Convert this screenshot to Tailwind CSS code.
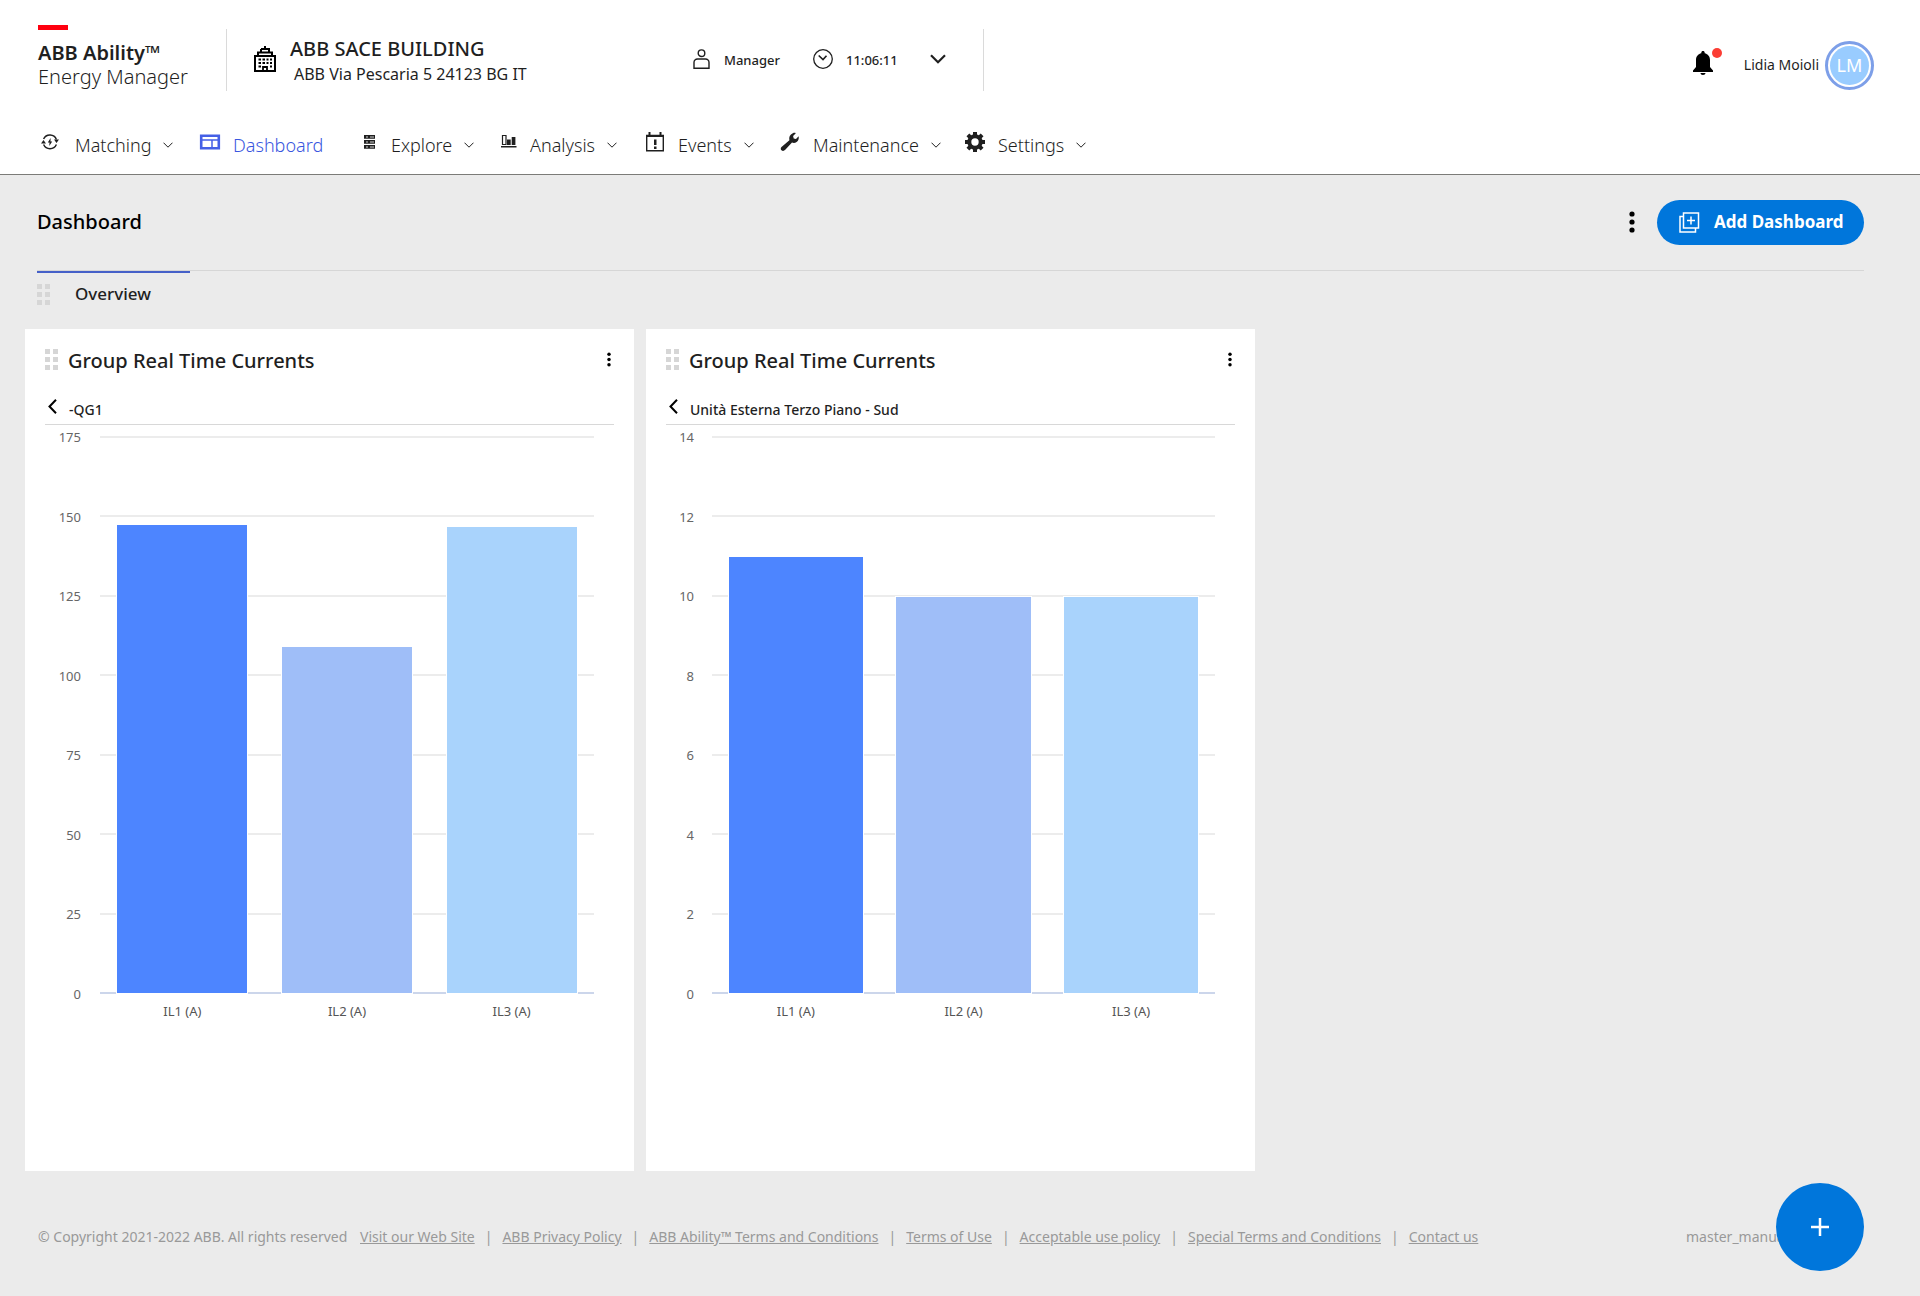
<!DOCTYPE html>
<html lang="en">
<head>
<meta charset="utf-8">
<meta name="viewport" content="width=device-width, initial-scale=1">
<title>ABB Ability Energy Manager</title>
<script src="https://cdn.jsdelivr.net/npm/@tailwindcss/browser@4"></script>
</head>
<body class="flex min-h-screen flex-col bg-[#ebebeb] font-['Noto_Sans','Open_Sans',sans-serif] text-[#1f1f1f]">

<svg class="hidden" aria-hidden="true">
  <symbol id="chev" viewBox="0 0 10 6"><path d="M.5.7 5 5.2 9.500.7" fill="none" stroke="currentColor" stroke-width="1"/></symbol>
  <symbol id="grip" viewBox="0 0 13 21"><path d="M0 0h5v5H0zM8 0h5v5H8zM0 8h5v5H0zM8 8h5v5H8zM0 16h5v5H0zM8 16h5v5H8z" fill="currentColor"/></symbol>
  <symbol id="dots" viewBox="0 0 6 22"><circle cx="3" cy="3" r="2.600"/><circle cx="3" cy="11" r="2.600"/><circle cx="3" cy="19" r="2.600"/></symbol>
  <symbol id="back" viewBox="0 0 9 15"><path d="M8 .8 1.500 7.500 8 14.200" fill="none" stroke="#000" stroke-width="2"/></symbol>
</svg>

<header class="border-b border-[#7b7b78] bg-white">
  <div class="flex h-[120px] items-start pl-[38px] pr-[46px] pt-[25px]">
    <div class="w-[188px]">
      <div class="h-[5px] w-[30px] bg-[#ff000f]"></div>
      <div class="mt-[11px] text-xl leading-6 font-semibold">ABB Ability™</div>
      <div class="text-xl leading-6 font-light">Energy Manager</div>
    </div>
    <div class="mt-1 h-[62px] w-px bg-[#dadada]"></div>
    <svg class="ml-[27px] mt-[21px] h-[26px] w-[22px]" viewBox="0 0 22 26" fill="none" stroke="#000" stroke-width="2">
      <path d="M11 0v3M7 3h8v3M7 3v3M4 10V6.500h14V10M1 10h20v15H1z"/>
      <path d="M4.500 13.500h2.500M8.500 13.500H11M12.500 13.500h2M16 13.500h2M4.500 17h2.500M8.500 17H11M12.500 17h2M16 17h2M4.500 20.500h2.500M16 20.500h2M9 25v-4h4v4" stroke-width="1.800"/>
    </svg>
    <div class="ml-[14px] mt-3 w-[403px]">
      <div class="text-xl leading-6 font-medium">ABB SACE BUILDING</div>
      <div class="pl-1 text-base leading-[26px]">ABB Via Pescaria 5 24123 BG IT</div>
    </div>
    <svg class="mt-6 h-5 w-[17px]" viewBox="0 0 17 20" fill="none" stroke="#1f1f1f" stroke-width="1.400"><circle cx="8.500" cy="4.200" r="3.300"/><path d="M1 19.200v-5.700a3.500 3.500 0 0 1 3.500-3.500h8a3.500 3.500 0 0 1 3.500 3.500v5.700z"/></svg>
    <div class="ml-[14px] mt-[25px] w-[89px] text-[13px] leading-5 font-medium">Manager</div>
    <svg class="mt-6 h-5 w-5" viewBox="0 0 20 20" fill="none" stroke="#1f1f1f" stroke-width="1.300"><circle cx="10" cy="10" r="9.300"/><path d="m5.700 6.500 4.300 4 3.500-3.800" stroke-width="1.600"/></svg>
    <div class="ml-[13px] mt-[25px] w-[84px] text-[13px] leading-5 font-medium">11:06:11</div>
    <button aria-label="Show details" class="mt-[29px]"><svg class="h-[10px] w-4" viewBox="0 0 16 10"><path d="m1 1.200 7 7 7-7" fill="none" stroke="#1f1f1f" stroke-width="2.200"/></svg></button>
    <div class="ml-[37px] mt-1 h-[62px] w-px bg-[#dadada]"></div>
    <div class="ml-auto flex items-center pt-[15px]">
      <button aria-label="Notifications" class="relative mr-[31px] flex h-[50px] w-5 items-start pt-[11px]">
        <svg class="h-6 w-5" viewBox="0 0 20 24"><path d="M10 0c1 0 1.700.7 1.700 1.700v.6C15 3 17 5.700 17 9v7l3 3.500V21H0v-1.500L3 16V9c0-3.300 2-6 5.300-6.700v-.6C8.300.7 9 0 10 0zM7.500 22h5c0 1.200-1.100 2-2.500 2s-2.500-.8-2.500-2z"/></svg>
        <span class="absolute left-[19px] top-2 size-[10px] rounded-full bg-[#fb3d34]"></span>
      </button>
      <span class="mr-[6px] text-sm leading-5">Lidia Moioli</span>
      <button class="flex size-[49px] items-center justify-center rounded-full border-[3px] border-[#7d9fe8] bg-white"><span class="flex size-[39px] items-center justify-center rounded-full bg-[#99ccff] text-lg leading-6 text-white">LM</span></button>
    </div>
  </div>
  <nav class="grid h-[54px] grid-cols-[158px_158px_139px_148px_135px_185px_auto] pl-10 text-lg leading-6 font-light">
    <a href="#" class="flex h-[50px] items-center">
      <svg class="mr-[11px] h-[18px] w-6 -translate-y-[3px]" viewBox="0 0 24 18" fill="none" stroke="#1f1f1f" stroke-width="1.500"><path d="M3.600 6A7 7 0 0 1 16.400 6.500M3.600 11.500A7 7 0 0 0 16.400 11.500"/><path d="M14 6.500h5l-2.500 3.500zM1 10.500h5L3.500 7z" fill="#1f1f1f" stroke="none"/><path d="M10.600 5 7.800 9.500h1.700L9.300 13l2.900-4.500h-1.700z" fill="#1f1f1f" stroke="none"/></svg>
      Matching<svg class="ml-3 h-[6px] w-[10px]"><use href="#chev"/></svg></a>
    <a href="#" class="flex h-[50px] items-center text-[#3a57e0]">
      <svg class="mr-[11px] h-[18px] w-6 -translate-y-[3px]" viewBox="0 0 24 18" fill="none" stroke="#4560e6"><path d="M3.200 2.700h17.600v12.600H3.200z" stroke-width="2.600"/><path d="M3 7h18M14 7v8" stroke-width="1.500"/></svg>
      Dashboard</a>
    <a href="#" class="flex h-[50px] items-center">
      <svg class="mr-[11px] h-[18px] w-6 -translate-y-[3px]" viewBox="0 0 24 18"><path d="M8 2h11v3.800H8zM8 7h11v3.800H8zM8 12h11v3.800H8z" fill="#1f1f1f"/><path d="M10 4h2M10 9h2M10 14h2M14 4h4M14 9h4M14 14h4" stroke="#fff" stroke-width=".8"/></svg>
      Explore<svg class="ml-3 h-[6px] w-[10px]"><use href="#chev"/></svg></a>
    <a href="#" class="flex h-[50px] items-center">
      <svg class="mr-[11px] h-[18px] w-6 -translate-y-[3px]" viewBox="0 0 24 18"><path d="M7.500 2.500h3.500v9H7.500z" fill="none" stroke="#1f1f1f" stroke-width="1.200"/><path d="M12 6.500h3.700v5.500H12zM16.700 4h3.700v8h-3.700zM6 13h15.500v1.500H6z" fill="#1f1f1f"/></svg>
      Analysis<svg class="ml-3 h-[6px] w-[10px]"><use href="#chev"/></svg></a>
    <a href="#" class="flex h-[50px] items-center">
      <svg class="mr-[11px] h-5 w-6 -translate-y-[3px]" viewBox="0 0 24 20"><path d="M3.700 3.500h16.600v15.300H3.700z" fill="none" stroke="#1f1f1f" stroke-width="1.400"/><path d="M3 3h18v2H3zM5.500 0h2v4h-2zM16.500 0h2v4h-2zM11 7.500h2.500v5.500H11zM11 14.500h2.500V17H11z" fill="#1f1f1f"/></svg>
      Events<svg class="ml-3 h-[6px] w-[10px]"><use href="#chev"/></svg></a>
    <a href="#" class="flex h-[50px] items-center">
      <svg class="mr-[11px] h-5 w-6 -translate-y-[3px]" viewBox="0 0 24 20"><path d="M14.800 1.200c1.300-.5 2.300-.4 3 0l-2.700 2.900.6 2.400 2.300.5 2.600-2.700c.6 2.300-.2 4.600-2 5.800-1.500 1-3.200 1-4.600.5l-7 7.500c-1 1-2.500 1.100-3.500.2-1-.9-1-2.400 0-3.400l7.900-6.700c-.7-2.900.5-5.800 3.400-7z" fill="#1f1f1f"/></svg>
      Maintenance<svg class="ml-3 h-[6px] w-[10px]"><use href="#chev"/></svg></a>
    <a href="#" class="flex h-[50px] items-center">
      <svg class="mr-[11px] h-5 w-6 -translate-y-[3px]" viewBox="0 0 24 20" fill="none" stroke="#1f1f1f"><circle cx="12" cy="10" r="5.700" stroke-width="4"/><path d="M12 0v3M12 17v3M2 10h3M19 10h3M4.900 2.900 7 5M17 15l2.100 2.100M4.900 17.100 7 15M17 5l2.100-2.100" stroke-width="4"/></svg>
      Settings<svg class="ml-3 h-[6px] w-[10px]"><use href="#chev"/></svg></a>
  </nav>
</header>

<main>
  <div class="mr-14 ml-[37px] flex h-24 items-center border-b border-[#d6d6d6] pb-[1px]">
    <h1 class="text-xl leading-6 font-medium text-black">Dashboard</h1>
    <button aria-label="Dashboard options" class="ml-auto mr-[22px]"><svg class="h-[22px] w-[6px]"><use href="#dots"/></svg></button>
    <button class="flex h-[45px] w-[207px] items-center rounded-full bg-[#0076db] pl-[22px] text-white">
      <svg class="mr-[14px] h-[21px] w-[21px]" viewBox="0 0 21 21" fill="none" stroke="#fff" stroke-width="1.500"><path d="M4.500 1h15v15h-15zM4 4.500H1V20h15.500v-3.500M12 4.500v8M8 8.500h8"/></svg>
      <span class="text-[17px] leading-6 font-bold">Add Dashboard</span></button>
  </div>
  <div class="ml-[37px] flex h-[58px] w-[153px] items-start border-t-2 border-[#4560c8]">
    <svg class="mt-[11px] mr-[25px] h-[21px] w-[13px] text-[#d6d6d6]"><use href="#grip"/></svg>
    <a href="#" class="mt-[9px] text-[17px] leading-6 font-medium">Overview</a>
  </div>

  <div class="grid grid-cols-3 gap-3 pl-[25px] pr-11">
    <section class="h-[842px] bg-white px-5 pt-5">
      <div class="flex h-[50px] items-start">
        <svg class="mr-[10px] h-[21px] w-[13px] text-[#d6d6d6]"><use href="#grip"/></svg>
        <h2 class="text-xl leading-6 font-medium">Group Real Time Currents</h2>
        <button aria-label="Widget options" class="mt-[3px] mr-[3px] ml-auto"><svg class="h-[15px] w-1"><use href="#dots"/></svg></button>
      </div>
      <div class="flex h-[26px] items-start border-b border-[#d8d8d8] pl-[3px]">
        <button aria-label="Back"><svg class="h-[15px] w-[9px]"><use href="#back"/></svg></button>
        <span class="ml-3 mt-[1px] text-sm leading-5 font-medium">-QG1</span>
      </div>
      <div class="mt-[11px] mr-5 flex">
        <div class="-my-[9px] mr-[19px] flex h-[577px] w-9 flex-col justify-between text-right text-[13px] leading-5 text-[#666]">
          <span>175</span><span>150</span><span>125</span><span>100</span><span>75</span><span>50</span><span>25</span><span>0</span>
        </div>
        <div class="flex-1">
          <div class="relative h-[558px]">
            <div class="absolute inset-0 flex flex-col justify-between"><i class="h-[2px] bg-[#ececec]"></i><i class="h-[2px] bg-[#ececec]"></i><i class="h-[2px] bg-[#ececec]"></i><i class="h-[2px] bg-[#ececec]"></i><i class="h-[2px] bg-[#ececec]"></i><i class="h-[2px] bg-[#ececec]"></i><i class="h-[2px] bg-[#ececec]"></i><i class="h-[2px] bg-[#ccd6eb]"></i></div>
            <div class="relative grid h-[557px] grid-cols-3 items-end justify-items-center">
              <div class="w-[79%] bg-[#4d85ff] ring-1 ring-white" style="height:84%"></div>
              <div class="w-[79%] bg-[#9fbef8] ring-1 ring-white" style="height:62.1%"></div>
              <div class="w-[79%] bg-[#a9d3fc] ring-1 ring-white" style="height:83.6%"></div>
            </div>
          </div>
          <div class="mt-[7px] grid grid-cols-3 text-center text-[13px] leading-5 text-[#555]"><span>IL1 (A)</span><span>IL2 (A)</span><span>IL3 (A)</span></div>
        </div>
      </div>
    </section>

    <section class="h-[842px] bg-white px-5 pt-5">
      <div class="flex h-[50px] items-start">
        <svg class="mr-[10px] h-[21px] w-[13px] text-[#d6d6d6]"><use href="#grip"/></svg>
        <h2 class="text-xl leading-6 font-medium">Group Real Time Currents</h2>
        <button aria-label="Widget options" class="mt-[3px] mr-[3px] ml-auto"><svg class="h-[15px] w-1"><use href="#dots"/></svg></button>
      </div>
      <div class="flex h-[26px] items-start border-b border-[#d8d8d8] pl-[3px]">
        <button aria-label="Back"><svg class="h-[15px] w-[9px]"><use href="#back"/></svg></button>
        <span class="ml-3 mt-[1px] text-sm leading-5 font-medium">Unità Esterna Terzo Piano - Sud</span>
      </div>
      <div class="mt-[11px] mr-5 flex">
        <div class="-my-[9px] mr-[18px] flex h-[577px] w-7 flex-col justify-between text-right text-[13px] leading-5 text-[#666]">
          <span>14</span><span>12</span><span>10</span><span>8</span><span>6</span><span>4</span><span>2</span><span>0</span>
        </div>
        <div class="flex-1">
          <div class="relative h-[558px]">
            <div class="absolute inset-0 flex flex-col justify-between"><i class="h-[2px] bg-[#ececec]"></i><i class="h-[2px] bg-[#ececec]"></i><i class="h-[2px] bg-[#ececec]"></i><i class="h-[2px] bg-[#ececec]"></i><i class="h-[2px] bg-[#ececec]"></i><i class="h-[2px] bg-[#ececec]"></i><i class="h-[2px] bg-[#ececec]"></i><i class="h-[2px] bg-[#ccd6eb]"></i></div>
            <div class="relative grid h-[557px] grid-cols-3 items-end justify-items-center">
              <div class="w-[80%] bg-[#4d85ff] ring-1 ring-white" style="height:78.2%"></div>
              <div class="w-[80%] bg-[#9fbef8] ring-1 ring-white" style="height:71.1%"></div>
              <div class="w-[80%] bg-[#a9d3fc] ring-1 ring-white" style="height:71.1%"></div>
            </div>
          </div>
          <div class="mt-[7px] grid grid-cols-3 text-center text-[13px] leading-5 text-[#555]"><span>IL1 (A)</span><span>IL2 (A)</span><span>IL3 (A)</span></div>
        </div>
      </div>
    </section>
  </div>
</main>

<footer class="flex items-center pt-14 pr-14 pl-[38px] text-sm leading-5 text-[#999]">
  <span class="w-[322px] whitespace-nowrap">© Copyright 2021-2022 ABB. All rights reserved</span>
  <div class="flex gap-[10px] whitespace-nowrap">
    <a href="#" class="underline">Visit our Web Site</a><span>|</span>
    <a href="#" class="underline">ABB Privacy Policy</a><span>|</span>
    <a href="#" class="underline">ABB Ability™ Terms and Conditions</a><span>|</span>
    <a href="#" class="underline">Terms of Use</a><span>|</span>
    <a href="#" class="underline">Acceptable use policy</a><span>|</span>
    <a href="#" class="underline">Special Terms and Conditions</a><span>|</span>
    <a href="#" class="underline">Contact us</a>
  </div>
  <span class="ml-auto w-[178px] truncate">master_manual</span>
</footer>

<button aria-label="Add widget" class="fixed right-14 bottom-[25px] flex size-[88px] items-center justify-center rounded-full bg-[#0076db]">
  <svg class="size-[18px]" viewBox="0 0 18 18"><path d="M9 0v18M0 9h18" stroke="#fff" stroke-width="2.500"/></svg>
</button>
</body>
</html>
